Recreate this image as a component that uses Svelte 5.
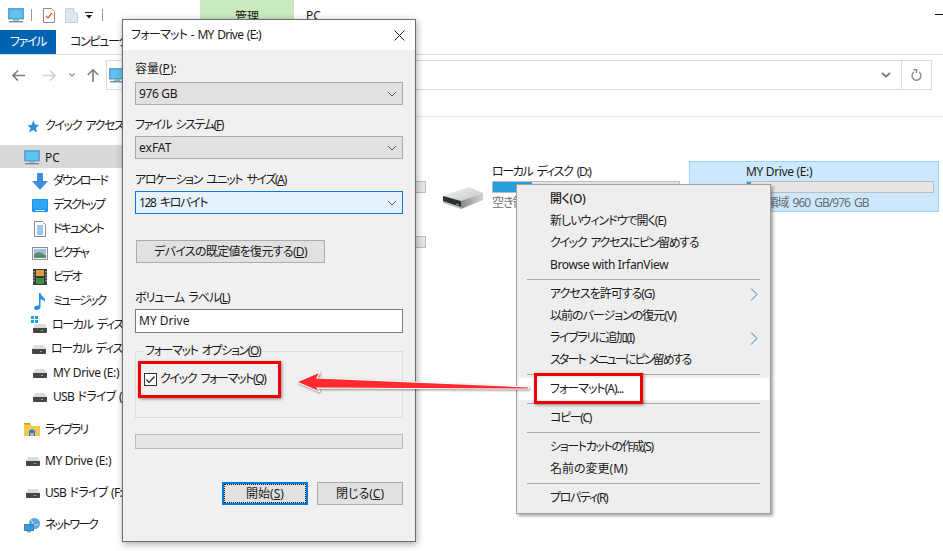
<script>
  // Explorer window with the format dialog and context menu open on top.
  // t0..t4 tighten the tracking: Noto kana run wider than the original UI font.
  const navItems = [
    { label: 'ダウンロード', icon: 'download', fit: 't4' },
    { label: 'デスクトップ', icon: 'desktop', fit: 't4' },
    { label: 'ドキュメント', icon: 'doc', fit: 't4' },
    { label: 'ピクチャ', icon: 'picture', fit: 't4' },
    { label: 'ビデオ', icon: 'video', fit: 't4' },
    { label: 'ミュージック', icon: 'music', fit: 't4' },
    { label: 'ローカル ディスク (C:)', icon: 'windrive', fit: 't3' },
    { label: 'ローカル ディスク (D:)', icon: 'drive', fit: 't3' },
    { label: 'MY Drive (E:)', icon: 'drive', fit: 't0' },
    { label: 'USB ドライブ (F:)', icon: 'drive', fit: 't1' }
  ];

  const menuGroups = [
    [
      { label: '開く(O)', bold: true, fit: 't0' },
      { label: '新しいウィンドウで開く(E)', fit: 't2' },
      { label: 'クイック アクセスにピン留めする', fit: 't3' },
      { label: 'Browse with IrfanView', fit: 't0' }
    ],
    [
      { label: 'アクセスを許可する(G)', sub: true, fit: 't2' },
      { label: '以前のバージョンの復元(V)', fit: 't2' },
      { label: 'ライブラリに追加(I)', sub: true, fit: 't3' },
      { label: 'スタート メニューにピン留めする', fit: 't4' }
    ],
    [{ label: 'フォーマット(A)...', hot: true, fit: 't2' }],
    [{ label: 'コピー(C)', fit: 't3' }],
    [{ label: 'ショートカットの作成(S)', fit: 't3' }, { label: '名前の変更(M)', fit: '' }],
    [{ label: 'プロパティ(R)', fit: 't3' }]
  ];
</script>

{#snippet pc(w, h)}
  <svg width={w} height={h} viewBox="0 0 16 15">
    <rect x="0.5" y="0.5" width="15" height="10.5" fill="#2ea7ea" stroke="#7f9db5" />
    <rect x="1.5" y="1.5" width="13" height="8.5" fill="#5cc4f5" />
    <rect x="5" y="11" width="6" height="2" fill="#9fb4c4" />
    <rect x="1" y="13" width="14" height="1.4" fill="#6f8ba0" />
  </svg>
{/snippet}

{#snippet bigDrive()}
  <svg width="42" height="24" viewBox="0 0 42 24">
    <defs>
      <linearGradient id="drive-top" x1="0" y1="0" x2="1" y2="1">
        <stop offset="0" stop-color="#f4f4f4" />
        <stop offset="1" stop-color="#c4c4c4" />
      </linearGradient>
      <linearGradient id="drive-side" x1="0" y1="0" x2="1" y2="0">
        <stop offset="0" stop-color="#8a8a8a" />
        <stop offset="1" stop-color="#d0d0d0" />
      </linearGradient>
    </defs>
    <path d="M1 10 L27 1 L41 7 L19 15 Z" fill="url(#drive-top)" />
    <path d="M1 10 L19 15 V23 L1 17 Z" fill="#bdbdbd" />
    <path d="M1 10 L19 15 V21 L1 15 Z" fill="#2f2f2f" />
    <path d="M19 15 L41 7 V14 L19 23 Z" fill="url(#drive-side)" />
    <path d="M14 17.500 L17 18.500 V19.500 L14 18.500 Z" fill="#36e05a" />
  </svg>
{/snippet}

{#snippet smallDrive()}
  <svg width="14" height="9" viewBox="0 0 14 9">
    <path d="M2 0 H12 L14 4 H0 Z" fill="#dcdcdc" />
    <path d="M0 4 H14 V8 Q14 9 13 9 H1 Q0 9 0 8 Z" fill="#454545" />
    <rect x="8" y="6" width="2" height="1" fill="#3fe05a" />
  </svg>
{/snippet}

{#snippet navIcon(name)}
  {#if name === 'download'}
    <svg width="16" height="17" viewBox="0 0 16 17"><path d="M5 0 H11 V8 H16 L8 17 L0 8 H5 Z" fill="#3f8fdc" /></svg>
  {:else if name === 'desktop'}
    <svg width="16" height="13" viewBox="0 0 16 13"><rect width="16" height="13" rx="1" fill="#1b8fe3" /><rect x="1" y="1" width="14" height="9" fill="#2da6f0" /><rect x="3" y="11" width="10" height="1" fill="#d5ecfb" /></svg>
  {:else if name === 'doc'}
    <svg width="12" height="16" viewBox="0 0 12 16"><path d="M0.5 0.5 H8.5 L11.5 3.500 V15.5 H0.5 Z" fill="#fff" stroke="#8c8c8c" /><path d="M3 5 H9 M3 7 H9 M3 9 H9 M3 11 H9 M3 13 H9" stroke="#3b8fd8" /></svg>
  {:else if name === 'picture'}
    <svg width="16" height="13" viewBox="0 0 16 13"><rect x="0.5" y="0.5" width="15" height="12" fill="#f3f3f3" stroke="#8f8f8f" /><rect x="2" y="2" width="12" height="5" fill="#9cc1df" /><path d="M2 7 L7 5 L14 8 V11 H2 Z" fill="#5f8a72" /></svg>
  {:else if name === 'video'}
    <svg width="14" height="16" viewBox="0 0 14 16"><rect width="14" height="16" fill="#3b3b3b" /><rect x="3" y="1" width="8" height="6" fill="#d9a13b" /><rect x="3" y="9" width="8" height="6" fill="#3c8f4d" /><path d="M1 2 V14 M13 2 V14" stroke="#cfcfcf" stroke-dasharray="1.500 1.500" /></svg>
  {:else if name === 'music'}
    <svg width="12" height="17" viewBox="0 0 12 17"><path d="M5 0 H6.500 C7 4 12 4 11 9 C10 7 8 6.500 6.500 6.500 V14 C6.500 16 4.500 17 2.500 17 C1 17 0 16 0 15 C0 13.500 2.500 12 5 12.500 Z" fill="#1f8fe8" /></svg>
  {:else if name === 'windrive'}
    <span class="win-drive">
      <svg class="win-mark" width="7" height="7" viewBox="0 0 7 7"><path d="M0 0 H3 V3 H0 Z M4 0 H7 V3 H4 Z M0 4 H3 V7 H0 Z M4 4 H7 V7 H4 Z" fill="#10a5e8" /></svg>
      {@render smallDrive()}
    </span>
  {:else}
    {@render smallDrive()}
  {/if}
{/snippet}

{#snippet chevron()}
  <svg class="chev" width="10" height="6" viewBox="0 0 10 6"><path d="M1 1 L5 5 L9 1" fill="none" stroke="#555" stroke-width="1" /></svg>
{/snippet}

<div class="screen">
  <header class="chrome">
    <div class="qat">
      <span class="qat-pc">{@render pc(16, 15)}</span>
      <i class="qat-sep"></i>
      <svg class="qat-doc" width="12" height="15" viewBox="0 0 12 15"><path d="M0.5 0.5 H8.5 L11.5 3.500 V14.500 H0.5 Z" fill="#fff" stroke="#8a8a8a" /><path d="M3 8 L5 10 L9 5" fill="none" stroke="#e0632a" stroke-width="1.300" /></svg>
      <svg class="qat-blank" width="13" height="15" viewBox="0 0 13 15"><path d="M0.5 0.5 H9 V5 H12.500 V14.500 H0.5 Z" fill="#dde6f2" stroke="#c5d2e3" /></svg>
      <svg class="qat-drop" width="8" height="7" viewBox="0 0 8 7"><path d="M0 0 H8 V1 H0 Z M1 3 H7 L4 6.500 Z" fill="#111" /></svg>
      <i class="qat-sep last"></i>
      <span class="manage">管理</span>
      <span class="title">PC</span>
      <i class="minimize"></i>
    </div>
    <nav class="tabs">
      <span class="tab-file t3">ファイル</span>
      <span class="tab t3">コンピューター</span>
    </nav>
    <div class="address-row">
      <svg class="nav-arrow" width="13" height="11" viewBox="0 0 13 11"><path d="M6 0.500 L1 5.500 L6 10.500 M1 5.500 H13" fill="none" stroke="#7d7d7d" stroke-width="1.600" /></svg>
      <svg class="nav-arrow fwd" width="13" height="11" viewBox="0 0 13 11"><path d="M7 0.500 L12 5.500 L7 10.500 M0 5.500 H12" fill="none" stroke="#d2d2d2" stroke-width="1.600" /></svg>
      <svg class="nav-drop" width="6" height="4" viewBox="0 0 6 4"><path d="M0.500 0.500 L3 3 L5.500 0.500" fill="none" stroke="#8a8a8a" stroke-width="1.200" /></svg>
      <svg class="nav-arrow up" width="12" height="13" viewBox="0 0 12 13"><path d="M0.800 6 L6 0.800 L11.200 6 M6 1 V13" fill="none" stroke="#7d7d7d" stroke-width="1.600" /></svg>
      <div class="address">
        <span class="address-icon">{@render pc(16, 15)}</span>
        <span class="address-fill"></span>
        <svg class="address-chev" width="10" height="6" viewBox="0 0 10 6"><path d="M1 1 L5 4.500 L9 1" fill="none" stroke="#7a7a7a" stroke-width="1.800" /></svg>
        <span class="refresh">
          <svg width="11" height="12" viewBox="0 0 11 12"><path d="M3 3 A4.500 4.500 0 1 0 8 3" fill="none" stroke="#8a8a8a" stroke-width="1.400" /><path d="M2.500 0.700 L5.500 0.700 L5.500 4" fill="none" stroke="#8a8a8a" stroke-width="1.400" /></svg>
        </span>
      </div>
    </div>
  </header>

  <div class="body">
    <aside class="sidebar">
      <div class="row top quick">
        <svg width="13" height="13" viewBox="0 0 13 13"><path d="M7.500 0.500 L9 4.500 L13 5 L10 8 L11 12.500 L7 10 L3 12.500 L4.500 8 L1.500 5.500 L5.500 4.800 Z" fill="#2f8fe0" /></svg>
        <span class="t3">クイック アクセス</span>
      </div>
      <div class="row top pc-row">
        <span class="pc-icon">{@render pc(16, 15)}</span>
        <span>PC</span>
      </div>
      {#each navItems as item}
        <div class="row child">
          <span class="icon-cell">{@render navIcon(item.icon)}</span>
          <span class={item.fit}>{item.label}</span>
        </div>
      {/each}
      <div class="row top library">
        <svg width="16" height="14" viewBox="0 0 16 14"><path d="M0 1 H6 L8 3 H16 V13 H0 Z" fill="#f2c64f" /><path d="M0 0 H6 L7 1.500 H0 Z" fill="#d99a16" /><path d="M5 13 V8 L8 6 L11 8 V13 H9.500 V10 H6.500 V13 Z" fill="#1f7fd4" /></svg>
        <span class="t4">ライブラリ</span>
      </div>
      <div class="row top drive-e">
        <span class="icon-cell top-cell">{@render smallDrive()}</span>
        <span class="t0">MY Drive (E:)</span>
      </div>
      <div class="row top drive-f">
        <span class="icon-cell top-cell">{@render smallDrive()}</span>
        <span class="t1">USB ドライブ (F:)</span>
      </div>
      <div class="row top network">
        <svg width="16" height="15" viewBox="0 0 16 15"><circle cx="10.500" cy="5.500" r="5.500" fill="#5aa6dc" /><path d="M7 2 Q10 4 9 7 Q12 8 14 6" fill="none" stroke="#cfe6f6" /><rect x="0.500" y="6.500" width="9" height="6" fill="#2f9be6" stroke="#4b7fa8" /><rect x="3" y="13" width="4" height="1.500" fill="#8aa5b8" /></svg>
        <span class="t4">ネットワーク</span>
      </div>
    </aside>

    <main class="content">
      <div class="tiles">
        <div class="tile">
          <div class="tile-text">
            <div class="tile-name t3">ローカル ディスク (C:)</div>
            <div class="bar"><div class="bar-fill c-fill"></div></div>
          </div>
        </div>
        <div class="tile">
          <span class="tile-icon">{@render bigDrive()}</span>
          <div class="tile-text">
            <div class="tile-name t3">ローカル ディスク (D:)</div>
            <div class="bar"><div class="bar-fill d-fill"></div></div>
            <div class="tile-free t2">空き領域 800 GB/976 GB</div>
          </div>
        </div>
        <div class="tile selected">
          <span class="tile-icon">{@render bigDrive()}</span>
          <div class="tile-text">
            <div class="tile-name t0">MY Drive (E:)</div>
            <div class="bar"><div class="bar-fill e-fill"></div></div>
            <div class="tile-free t2">空き領域 960 GB/976 GB</div>
          </div>
        </div>
        <div class="tile">
          <div class="tile-text">
            <div class="tile-name t1">USB ドライブ (F:)</div>
            <div class="bar"><div class="bar-fill c-fill"></div></div>
          </div>
        </div>
      </div>
    </main>
  </div>

  <section class="dialog">
    <div class="dialog-title">
      <span class="t1">フォーマット - MY Drive (E:)</span>
      <svg width="11" height="11" viewBox="0 0 11 11"><path d="M0.500 0.500 L10.500 10.500 M10.500 0.500 L0.500 10.500" stroke="#222" stroke-width="1" /></svg>
    </div>
    <div class="dialog-body">
      <div class="label first">容量(<u>P</u>):</div>
      <div class="combo"><span class="t0">976 GB</span>{@render chevron()}</div>
      <div class="label t3">ファイル システム(<u>F</u>)</div>
      <div class="combo"><span>exFAT</span>{@render chevron()}</div>
      <div class="label alloc t3">アロケーション ユニット サイズ(<u>A</u>)</div>
      <div class="combo focus"><span class="t3">128 キロバイト</span>{@render chevron()}</div>
      <button class="btn restore t1">デバイスの既定値を復元する(<u>D</u>)</button>
      <div class="label volume t2">ボリューム ラベル(<u>L</u>)</div>
      <div class="textbox">MY Drive</div>
      <fieldset class="group">
        <legend class="t3">フォーマット オプション(<u>O</u>)</legend>
        <label class="check">
          <svg width="13" height="13" viewBox="0 0 13 13"><rect x="0.500" y="0.500" width="12" height="12" fill="#fff" stroke="#333" /><path d="M2.500 6.500 L5 9.500 L10.500 3.500" fill="none" stroke="#333" stroke-width="1.300" /></svg>
          <span class="t3">クイック フォーマット(<u>Q</u>)</span>
        </label>
      </fieldset>
      <div class="progress"></div>
      <div class="actions">
        <button class="btn action primary"><span>開始(<u>S</u>)</span></button>
        <button class="btn action">閉じる(<u>C</u>)</button>
      </div>
    </div>
  </section>

  <section class="menu">
    {#each menuGroups as group, i}
      {#if i > 0}<div class="menu-sep"></div>{/if}
      {#each group as item}
        <div class="menu-item" class:bold={item.bold} class:hot={item.hot}>
          <span class={item.fit}>{item.label}</span>
          {#if item.sub}
            <svg width="8" height="13" viewBox="0 0 8 13"><path d="M1 0.500 L7 6.500 L1 12.500" fill="none" stroke="#3f7fc0" stroke-width="1" /></svg>
          {/if}
        </div>
      {/each}
    {/each}
  </section>

  <div class="callout callout-check"></div>
  <div class="callout callout-menu"></div>
  <svg class="arrow" width="250" height="30" viewBox="290 368 250 30">
    <path d="M298 382 L319 373 L316 378.500 L528 387.500 L528 388.500 L316 387.500 L319 391 Z" fill="#ff2a2e" stroke="#fff" stroke-width="2" stroke-linejoin="round" paint-order="stroke" />
  </svg>
</div>

<style>
  :global(body) {
    margin: 0;
    background: #fff;
  }
  .screen {
    position: relative;
    width: 943px;
    height: 551px;
    overflow: hidden;
    background: #fff;
    color: #1a1a1a;
    font-family: "Noto Sans", "Noto Sans CJK JP", sans-serif;
    font-size: 12px;
    font-feature-settings: "palt";
    line-height: 16px;
  }
  u {
    text-underline-offset: 1px;
  }
  .t0 {
    letter-spacing: -0.35px;
  }
  .t1 {
    letter-spacing: -0.7px;
    word-spacing: 1px;
  }
  .t2 {
    letter-spacing: -1px;
    word-spacing: 2px;
  }
  .t3 {
    letter-spacing: -1.35px;
    word-spacing: 2.5px;
  }
  .t4 {
    letter-spacing: -1.9px;
    word-spacing: 3px;
  }

  /* top chrome */
  .chrome {
    height: 116px;
  }
  .qat {
    display: flex;
    align-items: center;
    height: 30px;
    padding-left: 8px;
    box-sizing: border-box;
  }
  .qat-pc {
    display: flex;
    width: 23px;
  }
  .qat-sep {
    width: 1px;
    height: 12px;
    background: #9a9a9a;
  }
  .qat-sep.last {
    margin-left: 9px;
  }
  .qat-doc {
    margin-left: 11px;
  }
  .qat-blank {
    margin-left: 10px;
  }
  .qat-drop {
    margin-left: 7px;
  }
  .manage {
    align-self: flex-start;
    margin-left: 97px;
    width: 94px;
    height: 19px;
    padding-top: 9px;
    box-sizing: border-box;
    overflow: hidden;
    background: #c9e9bf;
    text-align: center;
  }
  .title {
    align-self: flex-start;
    margin-left: 12px;
    margin-top: 8px;
  }
  .minimize {
    align-self: flex-start;
    margin-top: 14px;
    margin-left: auto;
    width: 8px;
    height: 1px;
    background: #111;
  }
  .tabs {
    display: flex;
    align-items: center;
    height: 25px;
    border-bottom: 1px solid #dadada;
    box-sizing: border-box;
  }
  .tab-file {
    width: 56px;
    height: 24px;
    background: #0063b1;
    color: #fff;
    text-align: center;
    line-height: 23px;
  }
  .tab {
    margin-left: 14px;
    white-space: nowrap;
  }
  .address-row {
    display: flex;
    align-items: center;
    height: 30px;
    margin-top: 5px;
    padding-left: 12px;
  }
  .nav-arrow.fwd {
    margin-left: 18px;
  }
  .nav-drop {
    margin-left: 13px;
  }
  .nav-arrow.up {
    margin-left: 12px;
  }
  .address {
    display: flex;
    align-items: center;
    width: 826px;
    height: 30px;
    margin-left: 7px;
    border: 1px solid #dcdcdc;
    box-sizing: border-box;
  }
  .address-icon {
    display: flex;
    margin-left: 2px;
  }
  .address-fill {
    flex: 1;
  }
  .address-chev {
    margin-right: 10px;
  }
  .refresh {
    display: flex;
    align-items: center;
    justify-content: center;
    width: 29px;
    height: 28px;
    border-left: 1px solid #dcdcdc;
  }

  /* navigation pane */
  .body {
    display: flex;
    height: 435px;
  }
  .sidebar {
    width: 140px;
    flex: none;
    white-space: nowrap;
  }
  .row {
    display: flex;
    align-items: center;
    height: 24px;
    padding-top: 2px;
    box-sizing: border-box;
  }
  .row.top {
    padding-left: 24px;
    gap: 5px;
  }
  .quick {
    margin-top: -3px;
  }
  .quick svg {
    margin-left: 2px;
    margin-right: 1px;
  }
  .pc-row {
    height: 23px;
    margin-top: 8px;
    background: #d9d9d9;
  }
  .pc-icon {
    display: flex;
  }
  .row.child {
    padding-left: 32px;
    gap: 5px;
  }
  .icon-cell {
    display: flex;
    align-items: center;
    justify-content: center;
    width: 16px;
    height: 18px;
  }
  .top-cell {
    margin-left: 1px;
    width: 15px;
  }
  .win-drive {
    position: relative;
    display: flex;
    padding-top: 6px;
    padding-left: 1px;
  }
  .win-mark {
    position: absolute;
    left: -1px;
    top: -2px;
  }
  .library {
    margin-top: 9px;
  }
  .drive-e {
    margin-top: 7px;
  }
  .drive-f {
    margin-top: 8px;
  }
  .network {
    margin-top: 8px;
  }

  /* drive tiles */
  .content {
    flex: 1;
    border-top: 1px solid #e5e5e5;
    padding: 44px 0 0 41px;
    min-width: 0;
  }
  .tiles {
    display: grid;
    grid-template-columns: repeat(3, 250px);
    grid-auto-rows: 51px;
    gap: 4px;
  }
  .tile {
    position: relative;
    display: flex;
    border: 1px solid transparent;
    box-sizing: border-box;
    padding: 0 0 0 56px;
  }
  .tile.selected {
    background: #cce8ff;
    border-color: #99d1ff;
  }
  .tile-icon {
    position: absolute;
    left: 6px;
    top: 24px;
    display: flex;
  }
  .tile-text {
    flex: 1;
    white-space: nowrap;
    overflow: hidden;
  }
  .tile-name {
    height: 19px;
    line-height: 19px;
  }
  .bar {
    width: 188px;
    height: 12px;
    box-sizing: border-box;
    background: #e6e6e6;
    border: 1px solid #bcbcbc;
  }
  .bar-fill {
    height: 100%;
    background: #26a0da;
  }
  .c-fill {
    width: 60%;
  }
  .d-fill {
    width: 21%;
  }
  .e-fill {
    width: 2%;
  }
  .tile-free {
    margin: 2px 0 0 0;
    color: #6d6d6d;
  }

  /* format dialog */
  .dialog {
    position: absolute;
    left: 122px;
    top: 19px;
    width: 294px;
    height: 523px;
    box-sizing: border-box;
    border: 1px solid #6d6d6d;
    background: #f0f0f0;
    box-shadow: 1px 2px 7px rgba(0, 0, 0, 0.35);
  }
  .dialog-title {
    display: flex;
    align-items: center;
    justify-content: space-between;
    height: 30px;
    padding: 0 10px 0 8px;
    background: #fff;
  }
  .dialog-body {
    padding: 0 12px;
  }
  .label {
    height: 16px;
    margin: 12px 0 3px;
    white-space: nowrap;
    line-height: 16px;
  }
  .label.first {
    margin-top: 11px;
    margin-bottom: 5px;
  }
  .label.alloc {
    margin-top: 13px;
  }
  .combo {
    display: flex;
    align-items: center;
    justify-content: space-between;
    height: 23px;
    padding: 0 5px 0 3px;
    box-sizing: border-box;
    background: #e1e1e1;
    border: 1px solid #adadad;
  }
  .combo.focus {
    background: #e5f1fb;
    border-color: #0078d7;
  }
  .chev {
    flex: none;
  }
  .btn {
    display: block;
    margin: 0;
    padding: 0;
    font: inherit;
    font-feature-settings: inherit;
    color: inherit;
    background: #e1e1e1;
    border: 1px solid #adadad;
    box-sizing: border-box;
  }
  .restore {
    width: 189px;
    height: 23px;
    margin: 26px 0 0 1px;
  }
  .label.volume {
    margin-top: 27px;
    margin-bottom: 3px;
  }
  .textbox {
    height: 24px;
    line-height: 22px;
    padding-left: 3px;
    box-sizing: border-box;
    background: #fff;
    border: 1px solid #7a7a7a;
  }
  .group {
    height: 67px;
    margin: 18px 0 0;
    padding: 12px 0 0 8px;
    box-sizing: border-box;
    border: 1px solid #dcdcdc;
    position: relative;
  }
  .group legend {
    position: absolute;
    top: -9px;
    left: 7px;
    padding: 0 2px;
    background: #f0f0f0;
    line-height: 16px;
    white-space: nowrap;
  }
  .check {
    display: flex;
    align-items: center;
    gap: 3px;
    height: 16px;
    margin-top: 7px;
  }
  .progress {
    height: 15px;
    margin-top: 16px;
    box-sizing: border-box;
    background: #e6e6e6;
    border: 1px solid #bcbcbc;
  }
  .actions {
    display: flex;
    justify-content: flex-end;
    gap: 9px;
    margin-top: 33px;
  }
  .action {
    width: 86px;
    height: 23px;
  }
  .action.primary {
    border: 2px solid #0078d7;
    padding: 0;
  }
  .action.primary span {
    display: block;
    height: 17px;
    margin: 1px;
    line-height: 17px;
    outline: 1px dotted #111;
    outline-offset: 0;
  }

  /* context menu */
  .menu {
    position: absolute;
    left: 516px;
    top: 184px;
    width: 255px;
    height: 330px;
    box-sizing: border-box;
    padding: 3px 2px 0;
    background: #eeeeee;
    border: 1px solid #a0a0a0;
    box-shadow: 2px 2px 3px rgba(0, 0, 0, 0.35);
  }
  .menu-item {
    display: flex;
    align-items: center;
    justify-content: space-between;
    height: 22px;
    padding: 0 10px 0 31px;
    white-space: nowrap;
  }
  .menu-item.bold {
    font-weight: 500;
  }
  .menu-item.hot {
    background: #fff;
    margin-right: -1px;
  }
  .menu-sep {
    height: 1px;
    margin: 3px 8px 3px 8px;
    background: #a8a8a8;
  }

  /* annotations */
  .callout {
    position: absolute;
    box-sizing: border-box;
    border: 3px solid #f00000;
    box-shadow: 1px 1px 3px rgba(0, 0, 0, 0.45);
  }
  .callout-check {
    left: 138px;
    top: 361px;
    width: 143px;
    height: 37px;
  }
  .callout-menu {
    left: 534px;
    top: 373px;
    width: 109px;
    height: 31px;
  }
  .arrow {
    position: absolute;
    left: 290px;
    top: 368px;
    filter: drop-shadow(1px 1px 1px rgba(0, 0, 0, 0.45));
  }
</style>
